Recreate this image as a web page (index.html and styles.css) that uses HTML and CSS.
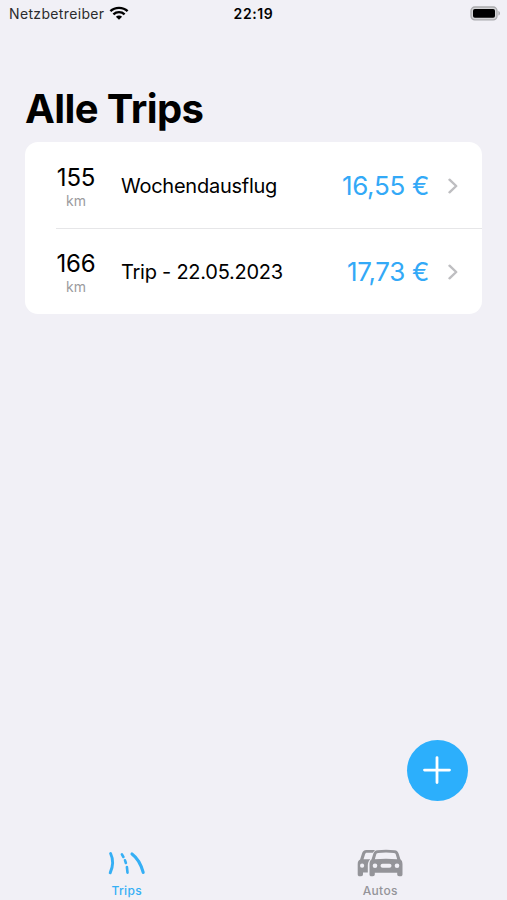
FILE: index.html
```html
<!DOCTYPE html>
<html lang="de">
<head>
    <meta charset="UTF-8">
    <meta name="viewport" content="width=device-width, initial-scale=1.0">
    <title>Alle Trips</title>
    <link rel="stylesheet" href="styles.css">
</head>
<body>
    <div class="status-bar">
        <div class="carrier">
            <span class="carrier-name">Netzbetreiber</span>
            <svg class="wifi" viewBox="0 0 20 14" width="20" height="14">
                <path d="M1.4 5.2C6 .8 14 .8 18.6 5.2M4.4 8.3C7.6 5.4 12.4 5.4 15.6 8.3" fill="none" stroke="#000" stroke-width="2.4"/>
                <path d="M6.9 10.7C8.7 9.1 11.3 9.1 13.1 10.7L10 13.7Z"/>
            </svg>
        </div>
        <span class="time">22:19</span>
        <svg class="battery" viewBox="0 0 31 15" width="31" height="15">
            <rect x="1" y="1" width="26" height="12.8" rx="3.8" fill="#d4d4d7" stroke="#aaaaad" stroke-width="1.3"/>
            <rect x="3" y="3" width="22" height="8.8" rx="1.8"/>
            <path d="M28.4 5C30.5 5.6 30.5 9 28.4 9.6Z" fill="#aaaaad"/>
        </svg>
    </div>

    <main>
        <h1>Alle Trips</h1>
        <div class="trip-list">
            <div class="trip">
                <div class="distance">
                    <span class="km-value">155</span>
                    <span class="km-unit">km</span>
                </div>
                <div class="trip-body">
                    <span class="trip-name">Wochendausflug</span>
                    <span class="price">16,55 €</span>
                    <svg class="chevron" viewBox="0 0 10 16" width="10" height="16"><path d="M1.5 1.7L8.2 8L1.5 14.3"/></svg>
                </div>
            </div>
            <div class="trip">
                <div class="distance">
                    <span class="km-value">166</span>
                    <span class="km-unit">km</span>
                </div>
                <div class="trip-body">
                    <span class="trip-name">Trip - 22.05.2023</span>
                    <span class="price">17,73 €</span>
                    <svg class="chevron" viewBox="0 0 10 16" width="10" height="16"><path d="M1.5 1.7L8.2 8L1.5 14.3"/></svg>
                </div>
            </div>
        </div>
    </main>

    <button class="add-button" aria-label="Trip hinzufügen">
        <svg viewBox="0 0 29 29" width="29" height="29"><path d="M14 1.6V26.6M1.5 14.1H26.5"/></svg>
    </button>

    <nav class="tab-bar">
        <div class="tab active">
            <svg class="road" viewBox="0 0 38 28" width="38" height="28">
                <path d="M2.6 4.5C5.7 11 4.8 18 2.2 23.8" stroke-width="2.9"/>
                <path d="M13.9 5.4L15.4 8M17 11.3L17.9 14M18.9 18L19.5 23.6" stroke-width="2.6"/>
                <path d="M24 5C29.4 9 33.2 16 35.2 23.4" stroke-width="3.1"/>
            </svg>
            <span>Trips</span>
        </div>
        <div class="tab">
            <svg class="cars" viewBox="0 0 46 28" width="46" height="28">
                <!-- rear car -->
                <path d="M18 1H9.4C6.8 1 5.7 2.4 5 4.4L3.1 10.6C1.4 11.6.7 13 .7 15.2V25.2C.7 26.6 1.5 27.2 2.7 27.2H4C5.4 27.2 6 26.4 6 25.2V23.6H10.8V16.9C10.8 14 11.7 11.9 13.3 10.3H6.5L8 5.4C8.3 4.3 8.9 3.8 10 3.8H15.8Z"/>
                <!-- front car -->
                <path fill-rule="evenodd" d="M20.3 1.2Q29 .3 37.7 1.2C39.8 1.4 40.9 2.5 41.6 4.5L43.4 10.3C44.9 11.6 45.5 13 45.5 15.2V25.2C45.5 26.6 44.8 27.2 43.5 27.2H42.2C40.9 27.2 40.2 26.5 40.2 25.2V23.7H17.8V25.2C17.8 26.5 17.1 27.2 15.8 27.2H14.5C13.2 27.2 12.5 26.6 12.5 25.2V15.2C12.5 13 13.1 11.6 14.6 10.3L16.4 4.5C17.1 2.5 18.2 1.4 20.3 1.2ZM21 4C19.9 4.1 19.5 4.5 19.2 5.4L17.8 10.3Q29 9.4 40.2 10.3L38.8 5.4C38.5 4.5 38.1 4.1 37 4Q29 3.2 21 4Z"/>
                <g fill="#f1f0f6">
                    <circle cx="5.1" cy="16.7" r="2.1"/>
                    <circle cx="18" cy="16.7" r="2.3"/>
                    <circle cx="40" cy="16.7" r="2.3"/>
                    <rect x="23.5" y="14.8" width="11" height="4" rx="2"/>
                </g>
            </svg>
            <span>Autos</span>
        </div>
    </nav>
</body>
</html>
```
FILE: styles.css
```css
* {
    box-sizing: border-box;
}
body {
    display: flex;
    flex-direction: column;
    height: 100vh;
    margin: 0;
    background-color: #f1f0f6;
    color: #000;
    font-family: Inter, "Liberation Sans", sans-serif;
    overflow: hidden;
}
.status-bar {
    display: grid;
    grid-template-columns: 1fr auto 1fr;
    align-items: center;
    height: 27px;
    padding: 0 6px 0 9px;
    font-size: 14px;
}
.carrier {
    display: flex;
    align-items: center;
    gap: 5px;
}
.carrier-name {
    color: #2b2b2d;
    letter-spacing: 0.35px;
}
.wifi {
    margin-top: -2px;
}
.time {
    margin-right: 3px;
    font-weight: 600;
    letter-spacing: 0.6px;
}
.battery {
    justify-self: end;
}
main {
    padding: 57px 25px 0;
}
h1 {
    margin: 0;
    height: 58px;
    font-size: 40px;
    font-weight: 700;
    line-height: 50px;
    letter-spacing: -0.6px;
}
.trip-list {
    border-radius: 13px;
    background-color: white;
}
.trip {
    display: flex;
    height: 86px;
    padding-left: 31px;
}
.distance {
    display: flex;
    flex-direction: column;
    align-items: center;
    width: 40px;
    padding-top: 21px;
}
.trip + .trip {
    background: linear-gradient(#e6e6e8, #e6e6e8) 31px 0 / 100% 1px no-repeat;
}
.km-value {
    font-size: 24px;
    line-height: 30px;
    letter-spacing: -0.2px;
}
.km-unit {
    color: #9b9b9e;
    font-size: 14px;
    line-height: 15px;
}
.trip-body {
    display: flex;
    flex: 1;
    align-items: center;
    padding: 1px 24px 0 25px;
}
.trip-name {
    flex: 1;
    font-size: 20px;
    letter-spacing: -0.25px;
}
.price {
    color: #33a9f7;
    font-size: 26px;
    letter-spacing: -0.3px;
}
.chevron {
    margin-left: 19px;
    fill: none;
    stroke: #bebec1;
    stroke-width: 2.4;
    stroke-linecap: round;
    stroke-linejoin: round;
}
.add-button {
    display: flex;
    align-items: center;
    justify-content: center;
    align-self: flex-end;
    width: 61px;
    height: 61px;
    margin: auto 39px 48px 0;
    padding: 0;
    border: none;
    border-radius: 50%;
    background-color: #2caffc;
}
.add-button svg {
    stroke: white;
    stroke-width: 2.8;
    stroke-linecap: round;
}
.tab-bar {
    display: grid;
    grid-template-columns: 1fr 1fr;
    height: 51px;
}
.tab {
    display: flex;
    flex-direction: column;
    align-items: center;
    color: #949499;
    font-size: 12px;
    font-weight: 500;
    line-height: 14px;
    letter-spacing: 0.3px;
}
.tab svg {
    margin-bottom: 7px;
}
.tab.active {
    color: #35aff5;
}
.road {
    fill: none;
    stroke: currentColor;
    stroke-linecap: round;
}
.cars {
    fill: currentColor;
}
```
